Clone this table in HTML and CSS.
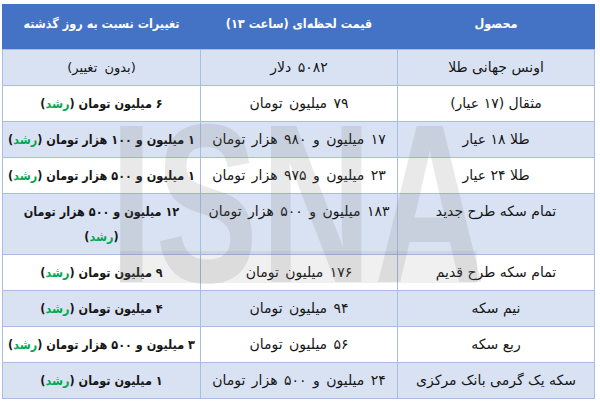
FILE: index.html
```html
<!DOCTYPE html>
<html lang="fa" dir="rtl">
<head>
<meta charset="utf-8">
<title>قیمت طلا و سکه</title>
<link rel="stylesheet" href="styles.css">
</head>
<body>
<div class="sheet">
  <table class="prices">
    <colgroup>
      <col class="c-name">
      <col class="c-price">
      <col class="c-change">
    </colgroup>
    <thead>
      <tr>
        <th>محصول</th>
        <th>قیمت لحظه‌ای (ساعت ۱۳)</th>
        <th>تغییرات نسبت به روز گذشته</th>
      </tr>
    </thead>
    <tbody>
      <tr class="alt">
        <td class="name">اونس جهانی طلا</td>
        <td class="price">۵۰۸۲ دلار</td>
        <td class="plain">(بدون تغییر)</td>
      </tr>
      <tr>
        <td class="name">مثقال (۱۷ عیار)</td>
        <td class="price">۷۹ میلیون تومان</td>
        <td class="chg">۶ میلیون تومان (<span class="up">رشد</span>)</td>
      </tr>
      <tr class="alt">
        <td class="name">طلا ۱۸ عیار</td>
        <td class="price">۱۷ میلیون و ۹۸۰ هزار تومان</td>
        <td class="chg">۱ میلیون و ۱۰۰ هزار تومان (<span class="up">رشد</span>)</td>
      </tr>
      <tr>
        <td class="name">طلا ۲۴ عیار</td>
        <td class="price">۲۳ میلیون و ۹۷۵ هزار تومان</td>
        <td class="chg">۱ میلیون و ۵۰۰ هزار تومان (<span class="up">رشد</span>)</td>
      </tr>
      <tr class="alt">
        <td class="name">تمام سکه طرح جدید</td>
        <td class="price">۱۸۳ میلیون و ۵۰۰ هزار تومان</td>
        <td class="chg">۱۲ میلیون و ۵۰۰ هزار تومان<br>(<span class="up">رشد</span>)</td>
      </tr>
      <tr>
        <td class="name">تمام سکه طرح قدیم</td>
        <td class="price">۱۷۶ میلیون تومان</td>
        <td class="chg">۹ میلیون تومان (<span class="up">رشد</span>)</td>
      </tr>
      <tr class="alt">
        <td class="name">نیم سکه</td>
        <td class="price">۹۴ میلیون تومان</td>
        <td class="chg">۴ میلیون تومان (<span class="up">رشد</span>)</td>
      </tr>
      <tr>
        <td class="name">ربع سکه</td>
        <td class="price">۵۶ میلیون تومان</td>
        <td class="chg">۳ میلیون و ۵۰۰ هزار تومان (<span class="up">رشد</span>)</td>
      </tr>
      <tr class="alt">
        <td class="name">سکه یک گرمی بانک مرکزی</td>
        <td class="price">۲۴ میلیون و ۵۰۰ هزار تومان</td>
        <td class="chg">۱ میلیون تومان (<span class="up">رشد</span>)</td>
      </tr>
    </tbody>
  </table>
  <div class="wm-band" aria-hidden="true"></div>
  <div class="watermark" aria-hidden="true" dir="ltr">ISNA</div>
</div>
</body>
</html>
```

FILE: styles.css
```css
html, body {
  margin: 0;
  padding: 0;
  background: #ffffff;
}

body {
  font-family: "DejaVu Sans", "Noto Sans", sans-serif;
  color: #161616;
}

.sheet {
  position: relative;
  width: 600px;
  height: 403px;
  padding: 4px 5px 0 3px;
  box-sizing: border-box;
  overflow: hidden;
}

.prices {
  width: 592px;
  border-collapse: collapse;
  table-layout: fixed;
  direction: rtl;
}

.c-name { width: 197px; }
.c-price { width: 197px; }
.c-change { width: 198px; }

.prices th,
.prices td {
  border: 1px solid #a9bde3;
  text-align: center;
  vertical-align: top;
  line-height: 25px;
  white-space: nowrap;
}

.prices th {
  background: #4472c4;
  color: #ffffff;
  font-family: "DejaVu Sans Condensed", "DejaVu Sans", sans-serif;
  font-weight: bold;
  font-size: 12.5px;
  padding: 6px 4px 13px;
  border-color: #4472c4 #4472c4 #a9bde3;
}

.prices td {
  padding: 5px 2px 5px;
  background: #ffffff;
}

.prices tr.alt td {
  background: #d9e2f3;
}

.prices td.name {
  font-size: 14px;
}

.prices td.price {
  font-size: 14px;
  word-spacing: 2px;
}

.prices td.chg {
  font-family: "DejaVu Sans Condensed", "DejaVu Sans", sans-serif;
  font-weight: bold;
  font-size: 12.5px;
}

.prices td.plain {
  font-size: 13px;
  word-spacing: 3px;
}

.up {
  color: #00a84f;
}

.watermark {
  position: absolute;
  left: 110px;
  top: 91px;
  font-family: "Liberation Sans", Arial, sans-serif;
  font-weight: bold;
  font-size: 226px;
  line-height: 1;
  color: rgba(110, 110, 110, 0.15);
  transform: scaleX(0.68);
  transform-origin: left top;
  letter-spacing: 4px;
  pointer-events: none;
  white-space: nowrap;
}

.wm-band {
  position: absolute;
  left: 120px;
  top: 251px;
  width: 357px;
  height: 32px;
  background: rgba(110, 110, 110, 0.1);
}
```
